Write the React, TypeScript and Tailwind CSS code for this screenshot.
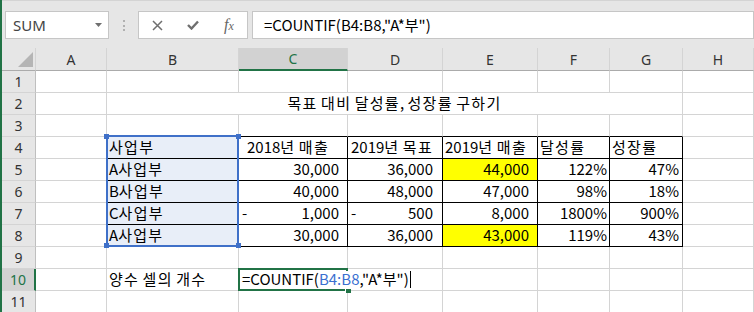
import React from "react";

// 엑셀 화면 재현: 목표 대비 달성률, 성장률 구하기
const COLS = ["A", "B", "C", "D", "E", "F", "G", "H"];
const CELL_FONT = "font-['Noto_Sans_CJK_KR','Noto_Sans',sans-serif]";
const HEAD_FONT = "font-['Noto_Sans','Liberation_Sans',sans-serif]";

// 맑은 고딕 한글 폭에 맞추기 위해 한글 부분만 자간을 조금 넓힌다
function K({ t }: { t: string }) {
  return (
    <>
      {t.split(/([가-힣]+)/).map((part, i) =>
        /[가-힣]/.test(part) ? (
          <span key={i} className="tracking-[1.3px]">
            {part}
          </span>
        ) : (
          <span key={i} className="whitespace-pre">
            {part}
          </span>
        )
      )}
    </>
  );
}

type Spec = { v?: React.ReactNode; cls?: string };

const txt = (v: string, cls = "pl-[1px]"): Spec => ({ v: <K t={v} />, cls });
const num = (v: string, pr: string, opts: { dash?: boolean; yellow?: boolean } = {}): Spec => ({
  v: (
    <>
      {opts.dash && <span className="pl-[3px]">-</span>}
      <span className="ml-auto">{v}</span>
    </>
  ),
  cls: `${pr} ${opts.yellow ? "bg-[#ffff00]" : ""}`,
});

// B4:G8
const TABLE: Spec[][] = [
  [txt("사업부", "pl-[2px]"), txt("2018년 매출", "pl-[8px]"), txt("2019년 목표", "pl-[3px]"), txt("2019년 매출", "pl-[2px]"), txt("달성률", "pl-[2px]"), txt("성장률", "pl-[2px]")],
  [txt("A사업부", "pl-[2px]"), num("30,000", "pr-[8px]"), num("36,000", "pr-[9px]"), num("44,000", "pr-[8px]", { yellow: true }), num("122%", "pr-[2px]"), num("47%", "pr-[3px]")],
  [txt("B사업부", "pl-[2px]"), num("40,000", "pr-[8px]"), num("48,000", "pr-[9px]"), num("47,000", "pr-[8px]"), num("98%", "pr-[2px]"), num("18%", "pr-[3px]")],
  [txt("C사업부", "pl-[2px]"), num("1,000", "pr-[8px]", { dash: true }), num("500", "pr-[9px]", { dash: true }), num("8,000", "pr-[8px]"), num("1800%", "pr-[2px]"), num("900%", "pr-[3px]")],
  [txt("A사업부", "pl-[2px]"), num("30,000", "pr-[8px]"), num("36,000", "pr-[9px]"), num("43,000", "pr-[8px]", { yellow: true }), num("119%", "pr-[2px]"), num("43%", "pr-[3px]")],
];

const inTable = (r: number, c: number) => r >= 4 && r <= 8 && c >= 1 && c <= 6;

function Toolbar() {
  return (
    <div className="h-[48px] bg-[#e6e6e6] border-t border-[#d4d4d4] pt-[10px] flex items-start">
      {/* 이름 상자 */}
      <div className={`ml-[3px] w-[104px] h-[28px] bg-white border border-[#c6c6c6] flex items-center justify-between pl-[7px] pr-[6px] text-[15px] text-[#444] ${HEAD_FONT}`}>
        <span>SUM</span>
        <svg width="7" height="4" viewBox="0 0 7 4">
          <polygon points="0,0 7,0 3.5,4" fill="#6f6f6f" />
        </svg>
      </div>
      <div className="ml-[14px] mt-[9px] w-[2px] flex flex-col gap-[2.5px]">
        <div className="w-[2px] h-[2px] bg-[#b0b0b0]" />
        <div className="w-[2px] h-[2px] bg-[#b0b0b0]" />
        <div className="w-[2px] h-[2px] bg-[#b0b0b0]" />
      </div>
      {/* 취소 / 입력 / 함수 삽입 */}
      <div className="ml-[13px] w-[110px] h-[28px] bg-white border border-[#c6c6c6] flex items-center">
        <svg className="ml-[13px]" width="11" height="11" viewBox="0 0 11 11">
          <path d="M1 1L10 10M10 1L1 10" stroke="#6f6f6f" strokeWidth="1.5" />
        </svg>
        <svg className="ml-[24px]" width="12" height="10" viewBox="0 0 12 10">
          <path d="M1 5L4.5 8.5L11 1.5" stroke="#6f6f6f" strokeWidth="2.4" fill="none" />
        </svg>
        <span className="ml-[25px] text-[16px] italic text-[#666] font-['Liberation_Serif',serif] leading-none">
          f<span className="text-[12px]">x</span>
        </span>
      </div>
      {/* 수식 입력줄 */}
      <div className={`ml-[4px] flex-1 h-[28px] bg-white border border-[#c6c6c6] flex items-center pl-[11px] text-[15px] text-black ${CELL_FONT}`}>
        =COUNTIF(B4:B8,"A*부")
      </div>
    </div>
  );
}

function App() {
  const cells: React.ReactNode[] = [];

  // 헤더 행
  cells.push(
    <div key="corner" className="bg-[#e6e6e6] border-r border-b border-r-[#d4d4d4] border-b-[#ababab] flex items-end justify-end pr-[2px] pb-[3px]">
      <svg width="15" height="15" viewBox="0 0 15 15">
        <polygon points="15,0 15,15 0,15" fill="#b5b5b5" />
      </svg>
    </div>
  );
  COLS.forEach((col) => {
    const sel = col === "C";
    cells.push(
      <div
        key={`h${col}`}
        className={`border-r border-r-[#d4d4d4] flex items-center justify-center text-[14px] ${HEAD_FONT} ${
          sel ? "bg-[#d2d2d2] border-b-2 border-b-[#217346] text-[#217346]" : "bg-[#e6e6e6] border-b border-b-[#ababab] text-[#333]"
        }`}
      >
        {col}
      </div>
    );
  });

  for (let r = 1; r <= 11; r++) {
    const selRow = r === 10;
    cells.push(
      <div
        key={`r${r}`}
        className={`border-b border-b-[#d4d4d4] flex items-center justify-center text-[14px] ${HEAD_FONT} ${
          selRow ? "bg-[#d2d2d2] border-r-2 border-r-[#217346] text-[#217346]" : "bg-[#e6e6e6] border-r border-r-[#bfbfbf] text-[#333]"
        }`}
      >
        {r}
      </div>
    );

    for (let c = 0; c < 8; c++) {
      // B2:G2 병합
      if (r === 2 && c >= 2 && c <= 6) continue;

      const rightBlack = inTable(r, c) || (c === 0 && r >= 4 && r <= 8);
      const bottomBlack = inTable(r, c) || (r === 3 && c >= 1 && c <= 6);
      const base = `border-r border-b ${rightBlack ? "border-r-black" : "border-r-[#d4d4d4]"} ${
        bottomBlack ? "border-b-black" : "border-b-[#d4d4d4]"
      } flex items-center whitespace-nowrap text-[15px] text-black ${CELL_FONT}`;

      if (r === 2 && c === 1) {
        cells.push(
          <div key="title" className={`${base} col-span-6 justify-center`}>
            <K t="목표 대비 달성률, 성장률 구하기" />
          </div>
        );
        continue;
      }

      let spec: Spec = {};
      if (inTable(r, c)) spec = TABLE[r - 4][c - 1];
      if (r === 10 && c === 1) spec = txt("양수 셀의 개수", "pl-[2px]");
      if (r === 10 && c === 2) {
        spec = {
          v: (
            <span className="relative z-20 h-[17px] bg-white pl-[2px] pr-[1px] flex items-center border-r border-r-black">
              =COUNTIF(<span className="text-[#3a6fd0]">B4:B8</span>,"A*부")
            </span>
          ),
          cls: "pl-[1px]",
        };
      }
      const selFill = c === 1 && r >= 4 && r <= 8 ? "bg-[#e8eef8]" : "";

      cells.push(
        <div key={`${r}-${c}`} className={`${base} ${selFill} ${spec.cls ?? ""}`}>
          {spec.v}
        </div>
      );
    }
  }

  return (
    <div className="w-[754px] h-[312px] overflow-hidden bg-white border-l-2 border-l-[#217346]">
      <Toolbar />
      <div className="relative grid grid-cols-[34px_71px_132px_109px_95px_95px_72px_73px_71px] grid-rows-[23px_repeat(11,22px)]">
        {cells}

        {/* 선택 범위 B4:B8 */}
        <div className="absolute left-[104px] top-[87px] w-[133px] h-[112px] border-2 border-[#3f70c8] z-10 pointer-events-none" />
        <div className="absolute left-[102px] top-[86px] w-[5px] h-[5px] bg-[#3f70c8] z-10" />
        <div className="absolute left-[234px] top-[86px] w-[5px] h-[5px] bg-[#3f70c8] z-10" />
        <div className="absolute left-[102px] top-[195px] w-[5px] h-[5px] bg-[#3f70c8] z-10" />
        <div className="absolute left-[234px] top-[195px] w-[5px] h-[5px] bg-[#3f70c8] z-10" />

        {/* 활성 셀 C10 */}
        <div className="absolute left-[236px] top-[220px] w-[110px] h-[23px] border-2 border-[#217346] z-10 pointer-events-none" />
        <div className="absolute left-[343px] top-[240px] w-[6px] h-[5px] bg-[#217346] border-l border-t border-white z-10" />
      </div>
    </div>
  );
}

export default App;
